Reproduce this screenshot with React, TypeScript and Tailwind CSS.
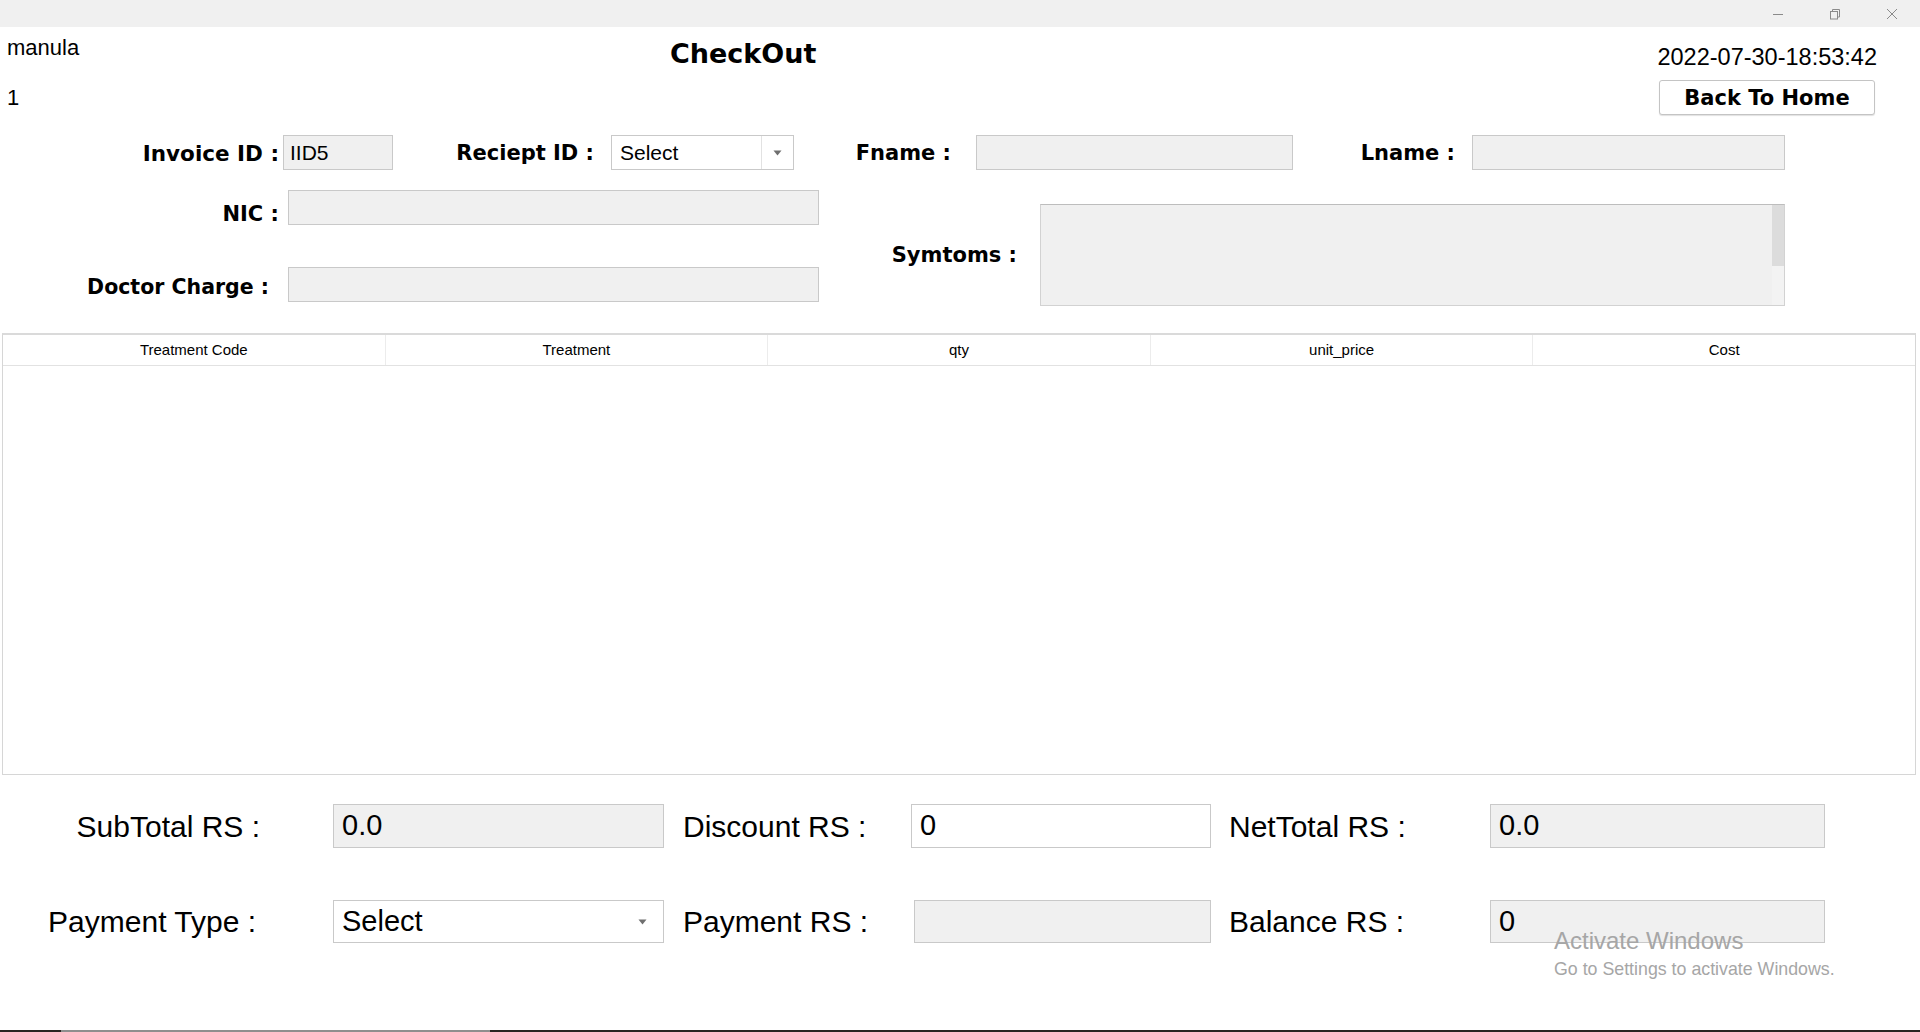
import React from "react";

const sans = "font-['Liberation_Sans',Arial,sans-serif]";
const bold = "font-['DejaVu_Sans',Verdana,sans-serif] font-bold";

function Arrow() {
  return (
    <svg width="9" height="6" viewBox="0 0 9 6" className="shrink-0">
      <path d="M0.5 0.5 L8.5 0.5 L4.5 5.5 Z" fill="#6f6f6f" />
    </svg>
  );
}

function Box({
  w,
  h,
  value,
  white,
  big,
}: {
  w: string;
  h: string;
  value?: string;
  white?: boolean;
  big?: boolean;
}) {
  return (
    <div
      className={`${w} ${h} shrink-0 flex items-center border border-[#c9c9c9] ${
        white ? "bg-white" : "bg-[#f0f0f0]"
      } ${big ? "pl-[8px] text-[29px]" : "pl-[6px] text-[21px]"} ${sans} font-normal text-black`}
    >
      {value}
    </div>
  );
}

const columns = ["Treatment Code", "Treatment", "qty", "unit_price", "Cost"];

export default function App() {
  return (
    <div className="relative w-[1920px] h-[1032px] overflow-hidden bg-white flex flex-col text-black">
      {/* window title bar */}
      <div className="h-[27px] shrink-0 bg-[#f0f0f0] flex items-center justify-end pr-[22px] gap-[45px]">
        <svg width="12" height="12" viewBox="0 0 12 12">
          <path d="M1 6.5 H11" stroke="#8a8a8a" strokeWidth="1" />
        </svg>
        <svg width="12" height="12" viewBox="0 0 12 12">
          <rect x="1.5" y="3.5" width="7" height="7.5" fill="none" stroke="#8a8a8a" />
          <path d="M3.5 3.5 V1.5 H10.5 V9 H8.5" fill="none" stroke="#8a8a8a" />
        </svg>
        <svg width="12" height="12" viewBox="0 0 12 12">
          <path d="M1 1 L11 11 M11 1 L1 11" stroke="#8a8a8a" strokeWidth="1" />
        </svg>
      </div>

      {/* header */}
      <div className="h-[88px] shrink-0 flex">
        <div className={`w-[670px] pl-[7px] pt-[8px] ${sans} text-[22px] leading-[26px]`}>
          <div>manula</div>
          <div className="mt-[24px]">1</div>
        </div>
        <div className={`pt-[11px] ${bold} text-[27px] leading-[32px]`}>CheckOut</div>
        <div className="ml-auto pr-[45px] pt-[16px] flex flex-col items-end">
          <div className={`${sans} text-[23.5px] leading-[28px] mr-[-2px]`}>2022-07-30-18:53:42</div>
          <button
            type="button"
            className={`mt-[9px] w-[216px] h-[35px] pt-[2px] bg-white border border-[#c4c4c4] rounded-[3px] shadow-[0_1px_1px_rgba(0,0,0,0.12)] ${bold} text-[21px]`}
          >
            Back To Home
          </button>
        </div>
      </div>

      {/* row 1 */}
      <div className={`mt-[20px] h-[35px] flex items-center ${bold} text-[21px]`}>
        <div className="w-[279px] text-right pt-[3px] text-[21.5px]">Invoice ID :</div>
        <div className="ml-[4px]">
          <Box w="w-[110px]" h="h-[35px]" value="IID5" />
        </div>
        <div className="w-[201px] text-right pt-[3px]">Reciept ID :</div>
        <div
          className={`ml-[17px] w-[183px] h-[35px] bg-white border border-[#c9c9c9] flex items-center ${sans} font-normal text-[21px]`}
        >
          <div className="flex-1 pl-[8px]">Select</div>
          <div className="w-[32px] h-full border-l border-[#e2e2e2] flex items-center justify-center">
            <Arrow />
          </div>
        </div>
        <div className="w-[157px] text-right pt-[3px]">Fname :</div>
        <div className="ml-[25px]">
          <Box w="w-[317px]" h="h-[35px]" />
        </div>
        <div className="w-[162px] text-right pt-[3px]">Lname :</div>
        <div className="ml-[17px]">
          <Box w="w-[313px]" h="h-[35px]" />
        </div>
      </div>

      {/* rows 2-3 + symptoms */}
      <div className={`mt-[20px] flex ${bold} text-[21px]`}>
        <div className="w-[819px] shrink-0">
          <div className="h-[35px] flex items-center">
            <div className="w-[279px] text-right pt-[14px]">NIC :</div>
            <div className="ml-[9px]">
              <Box w="w-[531px]" h="h-[35px]" />
            </div>
          </div>
          <div className="mt-[42px] h-[35px] flex items-center">
            <div className="w-[269px] text-right pt-[6px] text-[20.5px]">Doctor Charge :</div>
            <div className="ml-[19px]">
              <Box w="w-[531px]" h="h-[35px]" />
            </div>
          </div>
        </div>
        <div className="pt-[14px] flex items-center">
          <div className="w-[198px] text-right pt-[2px]">Symtoms :</div>
          <div className="ml-[23px] w-[745px] h-[102px] bg-[#f0f0f0] border border-[#d2d2d2] border-t-[#bdbdbd] flex justify-end">
            <div className="w-[12px] h-full flex flex-col">
              <div className="h-[61px] bg-[#dcdcdc]" />
              <div className="flex-1 bg-[#f3f3f3]" />
            </div>
          </div>
        </div>
      </div>

      {/* table */}
      <div className="mt-[27px] ml-[2px] w-[1914px] h-[442px] shrink-0 border border-[#d6d6d6] border-t-2 border-t-[#dadada] flex flex-col bg-white">
        <div className={`h-[31px] flex border-b border-[#e2e2e2] ${sans} text-[15px]`}>
          {columns.map((c, i) => (
            <div
              key={c}
              className={`flex-1 flex items-center justify-center ${
                i < columns.length - 1 ? "border-r border-[#ececec]" : ""
              }`}
            >
              {c}
            </div>
          ))}
        </div>
        <div className="flex-1" />
      </div>

      {/* totals */}
      <div className={`mt-[29px] h-[44px] flex items-center ${sans} text-[30px]`}>
        <div className="w-[260px] text-right">SubTotal RS :</div>
        <div className="ml-[73px]">
          <Box w="w-[331px]" h="h-[44px]" value="0.0" big />
        </div>
        <div className="ml-[19px] w-[228px]">Discount RS :</div>
        <Box w="w-[300px]" h="h-[44px]" value="0" white big />
        <div className="ml-[18px] w-[261px]">NetTotal RS :</div>
        <Box w="w-[335px]" h="h-[44px]" value="0.0" big />
      </div>

      <div className={`mt-[52px] h-[43px] flex items-center ${sans} text-[30px]`}>
        <div className="w-[256px] text-right">Payment Type :</div>
        <div className="ml-[77px] w-[331px] h-[43px] bg-white border border-[#c9c9c9] flex items-center pl-[8px] pr-[16px] text-[29px]">
          <div className="flex-1">Select</div>
          <Arrow />
        </div>
        <div className="ml-[19px] w-[231px]">Payment RS :</div>
        <Box w="w-[297px]" h="h-[43px]" big />
        <div className="ml-[18px] w-[261px]">Balance RS :</div>
        <Box w="w-[335px]" h="h-[43px]" value="0" big />
      </div>

      {/* taskbar edge */}
      <div className="mt-auto h-[2px] shrink-0 flex bg-[#2a2622]">
        <div className="ml-[61px] w-[429px] bg-[#8e8e8e]" />
      </div>

      {/* activation watermark */}
      <div className={`absolute left-[1554px] top-[926px] ${sans} text-[#a6a6a6] pointer-events-none`}>
        <div className="text-[24px] leading-[30px]">Activate Windows</div>
        <div className="text-[17.8px] leading-[22px] mt-[2px]">Go to Settings to activate Windows.</div>
      </div>
    </div>
  );
}
